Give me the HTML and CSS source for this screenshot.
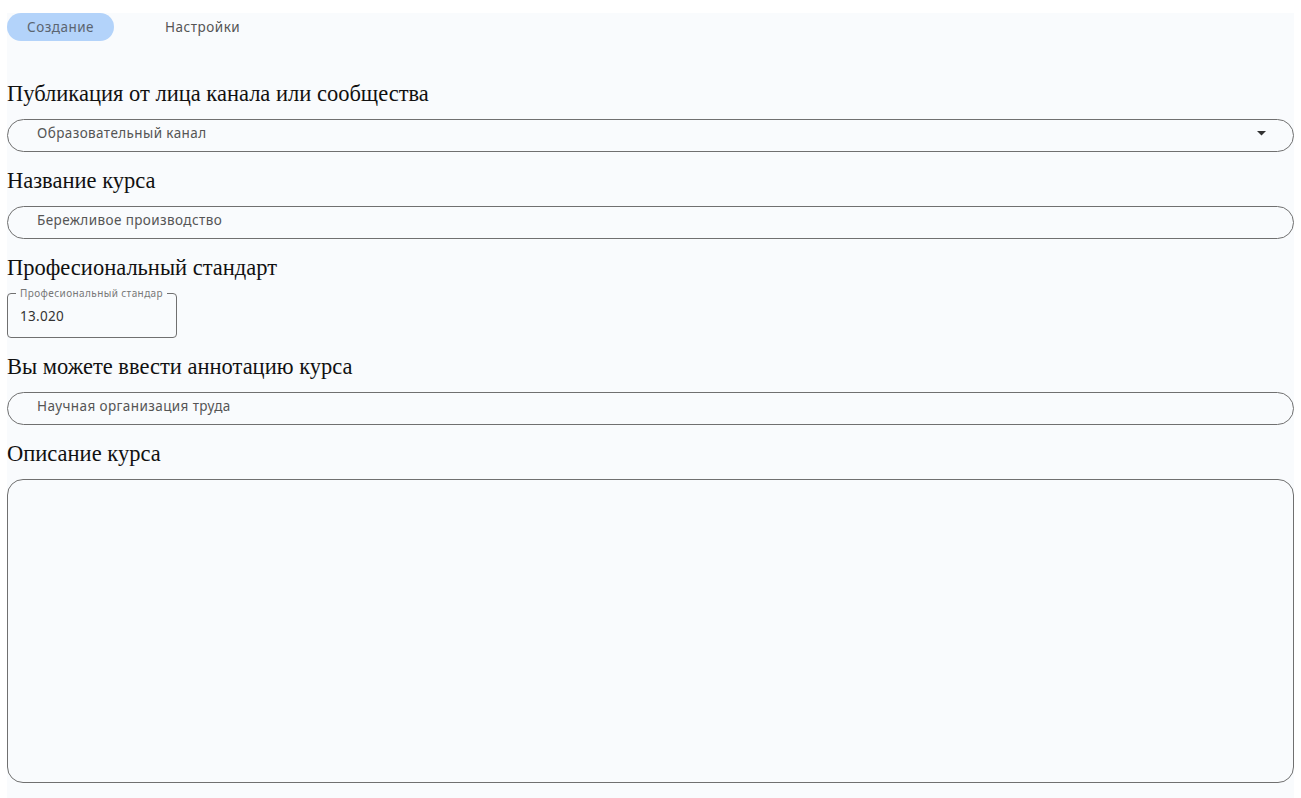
FILE: index.html
```html
<!DOCTYPE html>
<html lang="ru">
<head>
  <meta charset="UTF-8" />
  <title>Создание курса</title>
  <link rel="stylesheet" href="styles.css">
</head>
<body>
  <div class="page">
    <div class="tabs">
      <div class="tab active">Создание</div>
      <div class="tab">Настройки</div>
    </div>

    <h2 class="first">Публикация от лица канала или сообщества</h2>
    <div class="field select">
      <span>Образовательный канал</span>
      <svg class="arrow" width="9" height="5" viewBox="0 0 9 5"><path d="M0 0h9L4.5 4.5z" fill="#333"/></svg>
    </div>

    <h2>Название курса</h2>
    <div class="field"><span>Бережливое производство</span></div>

    <h2>Професиональный стандарт</h2>
    <div class="outlined">
      <div class="legend">Професиональный стандар</div>
      <div class="value">13.020</div>
    </div>

    <h2>Вы можете ввести аннотацию курса</h2>
    <div class="field"><span>Научная организация труда</span></div>

    <h2>Описание курса</h2>
    <div class="area"></div>
  </div>
</body>
</html>
```

FILE: styles.css
```css
* { box-sizing: border-box; }
body { margin: 0; background: #fff; font-family: "Noto Sans", sans-serif; color: #444; }
.page { margin: 13px 7px 0; background: #f9fbfd; padding-bottom: 20px; }

.tabs { display: flex; gap: 31px; }
.tab { height: 28px; line-height: 28px; padding: 0 20px; border-radius: 14px; font-size: 13.5px; letter-spacing: 0.5px; color: #555; }
.tab.active { background: #b3d3fa; color: #5b6570; }

h2 { font-family: "Liberation Serif", serif; font-weight: normal; font-size: 22.5px; line-height: 28px; color: #111; margin: 15px 0 11px; }
h2.first { margin-top: 39px; }

.field { height: 33px; border: 1px solid #707070; border-radius: 17px; padding: 0 27px 0 29px; display: flex; align-items: center; justify-content: space-between; font-size: 13.5px; letter-spacing: 0.4px; color: #555; }
.field span { margin-top: -5px; }
.select .arrow { margin-top: -4px; }

.outlined { position: relative; width: 170px; height: 45px; border: 1px solid #707070; border-radius: 4px; padding: 13px 12px 0; }
.outlined .legend { position: absolute; top: -7px; left: 8px; padding: 0 4px; background: #f9fbfd; font-size: 10px; line-height: 13px; letter-spacing: 0.4px; color: #777; white-space: nowrap; }
.outlined .value { font-size: 13.5px; letter-spacing: 0.3px; color: #333; }

.area { height: 304px; border: 1px solid #707070; border-radius: 16px; }
```
